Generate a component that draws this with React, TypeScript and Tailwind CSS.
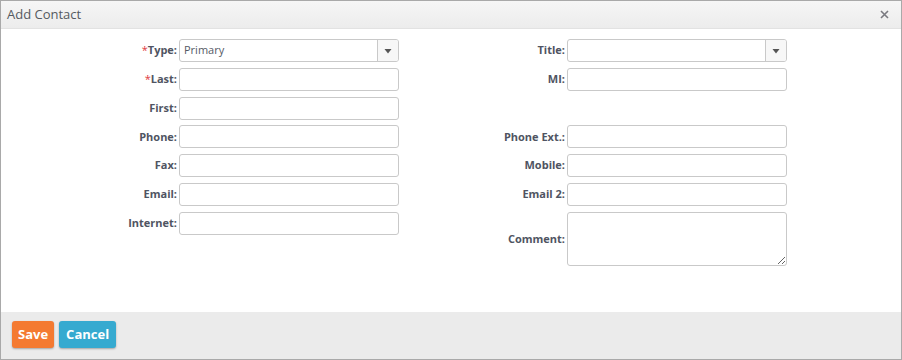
import React from "react";

const font = { fontFamily: '"Open Sans", "Liberation Sans", sans-serif' };

function Label({ text, req, h = "h-[23px]" }: { text: string; req?: boolean; h?: string }) {
  return (
    <div className={`${h} self-start flex items-center justify-end pr-[2px] text-[11px] font-bold text-[#4f5462] whitespace-nowrap`}>
      {req && <span className="text-[#e0393e] font-normal">*</span>}
      {text}
    </div>
  );
}

function Input() {
  return (
    <div className="h-[23px] self-start">
      <input className="block w-[220px] h-[23px] border border-[#c9c9c9] rounded-[3px] bg-white outline-none px-1 text-[11px]" />
    </div>
  );
}

function Select({ value }: { value?: string }) {
  return (
    <div className="h-[23px] w-[220px] self-start flex border border-[#c9c9c9] rounded-[3px] bg-white overflow-hidden">
      <div className="flex-1 flex items-center pl-[4px] text-[11px] text-[#555a66]">{value}</div>
      <div className="w-[21px] border-l border-[#c9c9c9] bg-[#f7f7f7] flex items-center justify-center">
        <svg width="8" height="6" viewBox="0 0 8 6">
          <path d="M0.5 1 L7.5 1 L4 5.5 Z" fill="#555" />
        </svg>
      </div>
    </div>
  );
}

export default function App() {
  return (
    <div style={font} className="w-[902px] h-[360px] border border-[#a9a9a9] flex flex-col bg-white">
      <div className="h-[28px] shrink-0 bg-gradient-to-b from-[#f6f6f6] to-[#ececec] border-b border-[#e2e2e2] flex items-center justify-between pl-[6px] pr-[12px]">
        <span className="text-[13px] text-[#555a60]">Add Contact</span>
        <svg width="9" height="9" viewBox="0 0 9 9">
          <path d="M1 1 L8 8 M8 1 L1 8" stroke="#7a7a80" strokeWidth="1.6" />
        </svg>
      </div>
      <div className="flex-1 pt-[10px]">
        <div className="grid grid-cols-[178px_220px_168px_220px] gap-y-[5.8px] items-start">
          <Label text="Type:" req />
          <Select value="Primary" />
          <Label text="Title:" />
          <Select />

          <Label text="Last:" req />
          <Input />
          <Label text="MI:" />
          <Input />

          <Label text="First:" />
          <Input />
          <div className="h-[23px]" />
          <div className="h-[23px]" />

          <Label text="Phone:" />
          <Input />
          <Label text="Phone Ext.:" />
          <Input />

          <Label text="Fax:" />
          <Input />
          <Label text="Mobile:" />
          <Input />

          <Label text="Email:" />
          <Input />
          <Label text="Email 2:" />
          <Input />

          <Label text="Internet:" />
          <Input />
          <Label text="Comment:" h="h-[54px]" />
          <textarea className="w-[220px] h-[54px] border border-[#c9c9c9] rounded-[3px] outline-none block" />
        </div>
      </div>
      <div className="h-[47px] shrink-0 bg-[#ebebeb] flex items-start gap-[5px] pl-[11px] pt-[9px]">
        <button className="h-[27px] px-[6px] rounded-[3px] bg-[#f47a31] text-white text-[13px] font-bold shadow-[0_1px_2px_rgba(0,0,0,0.3)]">
          Save
        </button>
        <button className="h-[27px] px-[7px] rounded-[3px] bg-[#36aad0] text-white text-[13px] font-bold shadow-[0_1px_2px_rgba(0,0,0,0.3)]">
          Cancel
        </button>
      </div>
    </div>
  );
}
